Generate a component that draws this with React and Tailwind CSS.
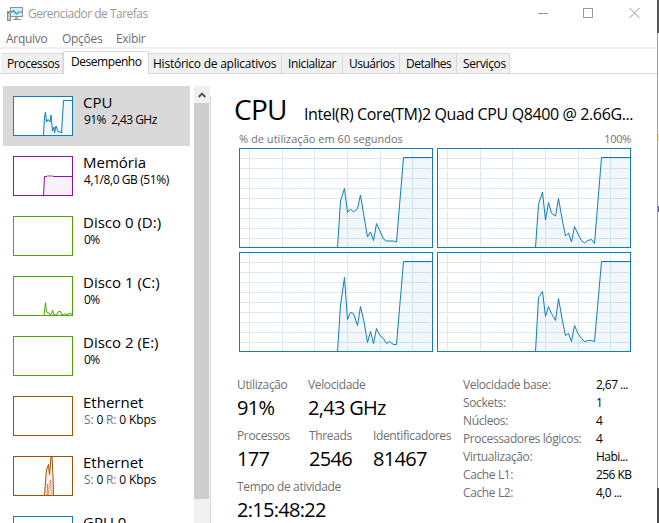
import clsx from "clsx";

// ─── Data ─────────────────────────────────────────────────────────────────────
const TABS = [
  { label: "Processos", width: "w-[62px]", text: "pl-[6px] tracking-[-0.4px]" },
  { label: "Desempenho", width: "w-[86px]", text: "pl-[7px] tracking-[-0.45px]", active: true },
  { label: "Histórico de aplicativos", width: "w-[133px]", text: "pl-[4px] tracking-[-0.24px]" },
  { label: "Inicializar", width: "w-[61px]", text: "pl-[6px] tracking-[-0.4px]" },
  { label: "Usuários", width: "w-[57px]", text: "pl-[6px] tracking-[-0.5px]" },
  { label: "Detalhes", width: "w-[57px]", text: "pl-[6px] tracking-[-0.5px]" },
  { label: "Serviços", width: "w-[53px]", text: "pl-[6px] tracking-[-0.4px]" },
];

const NET = (
  <span className="tracking-[-0.15px]">
    <span className="text-[#707070]">S:</span> 0 <span className="text-[#707070]">R:</span> 0 Kbps
  </span>
);

const DEVICES = [
  {
    name: "CPU",
    detail: <>91%&nbsp; 2,43 GHz</>,
    color: "#117dbb",
    line: "30.5,39.5 31.5,21 32.5,16 33.5,26 35,23.5 37,26 38,19 39.5,35 41,31 41.5,37 43,30 45,35.5 49,36.5 48.5,37 50.5,4.5 60,4.5",
    selected: true,
  },
  {
    name: "Memória",
    detail: <span className="tracking-[-0.42px]">4,1/8,0 GB (51%)</span>,
    color: "#8b12ae",
    line: "30.5,39.5 31.5,20.5 34,20.5 35,19.5 36,20.5 37,19.5 38,20.5 39,19.5 40,20.5 60,20.5",
  },
  { name: "Disco 0 (D:)", detail: "0%", color: "#4da60c" },
  {
    name: "Disco 1 (C:)",
    detail: "0%",
    color: "#4da60c",
    line: "31,39.5 32.5,26.5 33.5,36 36,37 37,39 38.5,38 39.5,34 41,39 44,38.5 45.5,35.5 47.5,35.5 49,39 51,38.5 52.5,37.5 54,39 56,37.5 59,38",
  },
  { name: "Disco 2 (E:)", detail: "0%", color: "#4da60c" },
  { name: "Ethernet", detail: NET, color: "#a74f01" },
  {
    name: "Ethernet",
    detail: NET,
    color: "#a74f01",
    line: "31.5,39.5 33,19 33.5,14 35.5,8.5 36.5,18.5 38,1 39,1 40,20 40.5,39.5",
    dashed: "34,39.5 34.5,28 35,39 37.5,24 38.5,39",
  },
  { name: "GPU 0", detail: "0%", color: "#117dbb" },
];

const CORES = [
  "98.5,99.5 101.5,53 105.5,40.5 108.5,64.5 111.5,61 114.5,64 118.5,60.5 121.5,47 124.5,65.5 128.5,89 131.5,84 134.5,92.5 137.5,75.5 141,83 144.5,91 147.5,93 154.5,93 157.5,94 164.5,9.5 193.5,9.5",
  "98.5,99.5 101.5,56.5 105.5,44 108.5,72 111.5,54.5 114.5,65 118.5,68 121.5,50.5 125,70.5 128.5,88 131.5,85 134.5,94 137.5,78.5 141,86 144.5,92.5 147.5,95 150.5,92.5 154.5,91.5 157.5,95.5 164.5,9.5 193.5,9.5",
  "98.5,99.5 101.5,53 105.5,25.5 108.5,67.5 111.5,60.5 114.5,61.5 118.5,73.5 121.5,54.5 125,69.5 128.5,90.5 131.5,79.5 134.5,91.5 137.5,76.5 141,83.5 144.5,86.5 147.5,91.5 150.5,89.5 154.5,92.5 157.5,92.5 164.5,9.5 193.5,9.5",
  "98.5,99.5 101.5,45.5 105.5,39.5 108.5,64.5 111.5,54.5 114.5,61.5 118.5,68.5 121.5,46.5 125,66.5 128.5,83.5 131.5,81.5 134.5,89.5 137.5,73.5 141,81.5 144.5,86.5 147.5,89.5 151.5,88.5 154.5,88.5 157.5,89.5 164.5,9.5 193.5,9.5",
];

const SPECS = [
  ["Velocidade base:", "2,67 ..."],
  ["Sockets:", "1"],
  ["Núcleos:", "4"],
  ["Processadores lógicos:", "4"],
  ["Virtualização:", "Habi..."],
  ["Cache L1:", "256 KB"],
  ["Cache L2:", "4,0 ..."],
];

// ─── Title bar and menu ───────────────────────────────────────────────────────
function AppIcon() {
  return (
    <svg width="17" height="15" viewBox="0 0 17 15" className="shrink-0">
      <rect x="0.5" y="4.5" width="3" height="9" fill="#c9c9c9" stroke="#8a8a8a" />
      <rect x="1" y="5" width="1" height="2" fill="#4caf50" />
      <rect x="3.5" y="0.5" width="12" height="9" fill="#d5eefb" stroke="#8f8f8f" />
      <path d="M4 5.5 L6.5 3.5 L9.5 7 L12 5 L15 5" fill="none" stroke="#2294c8" strokeWidth="1.2" />
      <path d="M8 10h3v2H8z" fill="#aaa" />
      <path d="M6 12.5h8" stroke="#8f8f8f" />
    </svg>
  );
}

function TitleBar() {
  return (
    <div className="flex h-[28px] shrink-0 items-center justify-between pl-[7px] pr-[17px]">
      <div className="flex items-center gap-[4px]">
        <AppIcon />
        <span className="text-[12px] leading-[16px] tracking-[-0.52px] text-[#999]">Gerenciador de Tarefas</span>
      </div>
      <div className="-mt-[2px] flex items-center text-[#999]">
        <svg width="10" height="10" viewBox="0 0 10 10" className="mr-[35px]">
          <path d="M0 5.5h10" stroke="currentColor" />
        </svg>
        <svg width="10" height="10" viewBox="0 0 10 10" className="mr-[36px]">
          <rect x="0.5" y="0.5" width="9" height="9" fill="none" stroke="currentColor" />
        </svg>
        <svg width="11" height="10" viewBox="0 0 11 10">
          <path d="M0.5 0l10 10M10.5 0l-10 10" stroke="currentColor" />
        </svg>
      </div>
    </div>
  );
}

function MenuBar() {
  return (
    <div className="flex h-[21px] shrink-0 border-b-2 border-[#f0f0f0] pl-[6px] text-[12px] leading-[22px] tracking-[-0.3px] text-[#6d6d6d]">
      <span className="w-[56px]">Arquivo</span>
      <span className="w-[54px]">Opções</span>
      <span>Exibir</span>
    </div>
  );
}

function TabStrip() {
  return (
    <div className="flex h-[25px] shrink-0 items-end border-b border-[#d9d9d9] pl-px">
      {TABS.map((tab) => (
        <div
          key={tab.label}
          className={clsx(
            "shrink-0 whitespace-nowrap border-r border-t border-[#d9d9d9] text-[12px] leading-[20px]",
            tab.width,
            tab.text,
            tab.active ? "-mb-px h-[23px] border-l bg-white" : "h-[20px] bg-[#f0f0f0]"
          )}
        >
          {tab.label}
        </div>
      ))}
    </div>
  );
}

// ─── Device list ──────────────────────────────────────────────────────────────
function MiniChart({ color, line, dashed }) {
  return (
    <svg width="60" height="40" viewBox="0 0 60 40" className="shrink-0">
      <rect width="60" height="40" fill="#fff" />
      {line && (
        <>
          <polygon points={`${line} 60,40 30,40`} fill={color} fillOpacity={dashed ? 0 : 0.06} />
          <polyline points={line} fill={dashed ? "#fbeee4" : "none"} stroke={color} strokeWidth="1" />
        </>
      )}
      {dashed && <polyline points={dashed} fill="none" stroke="#d0703c" strokeDasharray="1.5 1" />}
      <rect x="0.5" y="0.5" width="59" height="39" fill="none" stroke={color} />
    </svg>
  );
}

function DeviceItem({ device }) {
  return (
    <div className={clsx("flex h-[60px] w-[187px] shrink-0 gap-[10px] pl-[10px] pt-[10px]", device.selected && "bg-[#d9d9d9]")}>
      <MiniChart color={device.color} line={device.line} dashed={device.dashed} />
      <div className="-mt-[4px] whitespace-nowrap">
        <div className="text-[15px] leading-[20px] tracking-[0px]">{device.name}</div>
        <div className="pl-px text-[12px] leading-[15px] tracking-[-0.55px]">{device.detail}</div>
      </div>
    </div>
  );
}

function Sidebar() {
  return (
    <div className="flex w-[211px] shrink-0 pl-[3px] pt-[12px]">
      <div className="flex w-[191px] flex-col overflow-hidden">
        {DEVICES.map((device, i) => (
          <DeviceItem key={i} device={device} />
        ))}
      </div>
      <div className="flex w-[16px] flex-col bg-[#f0f0f0]">
        <div className="flex h-[17px] items-center justify-center">
          <svg width="8" height="6" viewBox="0 0 8 6">
            <path d="M0.7 5L4 1.7L7.3 5" fill="none" stroke="#505050" strokeWidth="1.9" />
          </svg>
        </div>
        <div className="mr-px h-[396px] bg-[#cdcdcd]" />
      </div>
      <div className="mt-[10px] w-px bg-[#d9d9d9]" />
    </div>
  );
}

// ─── CPU details ──────────────────────────────────────────────────────────────
function CoreChart({ line }) {
  return (
    <svg width="194" height="100" viewBox="0 0 194 100">
      {[10.5, 43.5, 75.5, 108.5, 141.5, 173.5].map((x) => (
        <path key={x} d={`M${x} 0V100`} stroke="#d9eaf4" />
      ))}
      {[10, 20, 30, 40, 50, 60, 70, 80, 90].map((y) => (
        <path key={y} d={`M0 ${y + 0.5}H192`} stroke="#d9eaf4" />
      ))}
      <polygon points={`${line} 193.5,99.5`} fill="#117dbb" fillOpacity="0.06" />
      <polyline points={line} fill="none" stroke="#117dbb" strokeWidth="1" />
      <rect x="0.5" y="0.5" width="193" height="99" fill="none" stroke="#117dbb" />
    </svg>
  );
}

function Stat({ label, value, className }) {
  return (
    <div className={clsx("whitespace-nowrap", className)}>
      <div className="text-[12px] leading-[18px] tracking-[-0.36px] text-[#707070]">{label}</div>
      <div className="text-[20px] leading-[28px] tracking-[-0.7px]">{value}</div>
    </div>
  );
}

function CpuPanel() {
  return (
    <div className="flex flex-1 flex-col pt-[16px]">
      <div className="flex shrink-0 items-baseline whitespace-nowrap pl-[23px] leading-[38px]">
        <h1 className="w-[70px] text-[28px] tracking-[-0.7px]">CPU</h1>
        <span className="text-[16px] tracking-[-0.38px]">Intel(R) Core(TM)2 Quad CPU Q8400 @ 2.66G...</span>
      </div>
      <div className="-mt-[3px] ml-[28px] flex h-[18px] w-[392px] shrink-0 justify-between text-[11px] leading-[17px] text-[#707070]">
        <span className="tracking-[0.03px]">% de utilização em 60 segundos</span>
        <span className="tracking-[-0.3px]">100%</span>
      </div>
      <div className="ml-[28px] grid w-[392px] shrink-0 grid-cols-2 gap-[4px]">
        {CORES.map((line, i) => (
          <CoreChart key={i} line={line} />
        ))}
      </div>
      <div className="ml-[26px] mt-[24px] flex shrink-0">
        <div className="flex w-[226px] flex-col gap-[5px]">
          <div className="flex">
            <Stat className="w-[71px]" label="Utilização" value="91%" />
            <Stat label="Velocidade" value="2,43 GHz" />
          </div>
          <div className="flex">
            <Stat className="w-[72px]" label="Processos" value="177" />
            <Stat className="w-[64px]" label="Threads" value="2546" />
            <Stat label="Identificadores" value="81467" />
          </div>
          <Stat label="Tempo de atividade" value="2:15:48:22" />
        </div>
        <dl className="grid auto-rows-[18px] grid-cols-[133px_auto] whitespace-nowrap text-[12px] leading-[18px]">
          {SPECS.map(([label, value]) => (
            <div key={label} className="contents">
              <dt className="tracking-[-0.38px] text-[#707070]">{label}</dt>
              <dd className="tracking-[-0.55px]">{value}</dd>
            </div>
          ))}
        </dl>
      </div>
    </div>
  );
}

// ─── Window ───────────────────────────────────────────────────────────────────
export default function App() {
  return (
    <div className="flex h-[523px] w-[659px] overflow-hidden bg-white font-['Open_Sans','Noto_Sans',sans-serif] text-black">
      <div className="flex w-[657px] shrink-0 flex-col">
        <TitleBar />
        <MenuBar />
        <TabStrip />
        <div className="flex min-h-0 flex-1">
          <Sidebar />
          <CpuPanel />
        </div>
      </div>
      {/* window edge with a strip of the desktop behind it */}
      <div className="flex w-[2px] shrink-0 flex-col">
        <div className="h-[33px] bg-[#555]" />
        <div className="flex-1 border-l border-[#a0a0a0] pt-[101px]">
          <div className="h-[7px] bg-[#fbe3a0]" />
          <div className="mt-[65px] h-[6px] bg-[#5a5a8a]" />
        </div>
        <div className="h-[35px] bg-[#4a4a4a]" />
      </div>
    </div>
  );
}
